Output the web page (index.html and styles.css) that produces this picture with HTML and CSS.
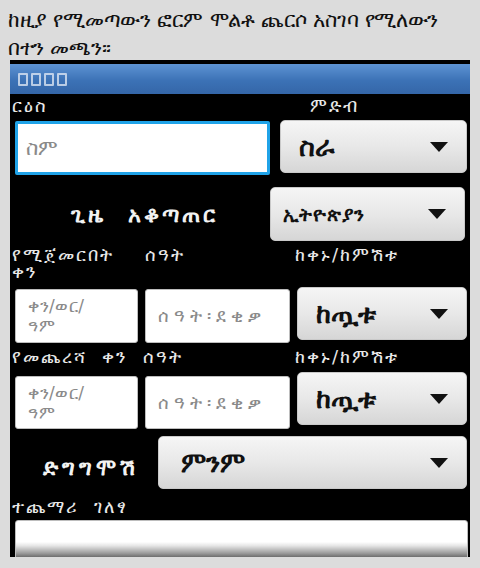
FILE: index.html
```html
<!DOCTYPE html>
<html lang="am">
<head>
<meta charset="utf-8">
<link rel="stylesheet" href="styles.css">
</head>
<body>
<p class="intro"><span class="line">ከዚያ የሚመጣውን ፎርም ሞልቶ ጨርሶ አስገባ የሚለውን</span><span class="line">በተን መጫን፡፡</span></p>
<div class="phone">
  <div class="titlebar"><span class="box"></span><span class="box"></span><span class="box"></span><span class="box"></span></div>
  <div class="form">
    <div class="labels row-a-labels">
      <span class="lbl lbl-title">ርዕስ</span>
      <span class="lbl lbl-cat">ምድብ</span>
    </div>
    <div class="row row-a">
      <div class="field field-focus w-name"><span class="ph ph-big">ስም</span></div>
      <div class="spinner w-cat"><span class="sp-text sp-big">ስራ</span><svg class="tri" viewBox="0 0 18 10"><polygon points="0,0 18,0 9,10"/></svg></div>
    </div>
    <div class="row row-b">
      <div class="caption w-cal">ጊዜ &nbsp;አቆጣጠር</div>
      <div class="spinner w-calsp"><span class="sp-text sp-small">ኢትዮጵያን</span><svg class="tri" viewBox="0 0 18 10"><polygon points="0,0 18,0 9,10"/></svg></div>
    </div>
    <div class="labels row-c-labels">
      <span class="lbl lbl-start">የሚጀመርበት ቀን</span>
      <span class="lbl lbl-time">ሰዓት</span>
      <span class="lbl">ከቀኑ/ከምሽቱ</span>
    </div>
    <div class="row row-c">
      <div class="field w-date"><span class="ph ph-small">ቀን/ወር/ ዓም</span></div>
      <div class="field w-time"><span class="ph ph-mid">ሰዓት፡ደቂቃ</span></div>
      <div class="spinner w-ampm"><span class="sp-text sp-big">ከጧቱ</span><svg class="tri" viewBox="0 0 18 10"><polygon points="0,0 18,0 9,10"/></svg></div>
    </div>
    <div class="labels row-d-labels">
      <span class="lbl lbl-end">የመጨረሻ &nbsp;ቀን &nbsp;ሰዓት</span>
      <span class="lbl">ከቀኑ/ከምሽቱ</span>
    </div>
    <div class="row row-d">
      <div class="field w-date"><span class="ph ph-small">ቀን/ወር/ ዓም</span></div>
      <div class="field w-time"><span class="ph ph-mid">ሰዓት፡ደቂቃ</span></div>
      <div class="spinner w-ampm"><span class="sp-text sp-big">ከጧቱ</span><svg class="tri" viewBox="0 0 18 10"><polygon points="0,0 18,0 9,10"/></svg></div>
    </div>
    <div class="row row-e">
      <div class="caption w-rep">ድግግሞሽ</div>
      <div class="spinner w-repsp"><span class="sp-text sp-big sp-indent">ምንም</span><svg class="tri" viewBox="0 0 18 10"><polygon points="0,0 18,0 9,10"/></svg></div>
    </div>
    <div class="labels row-f-labels">
      <span class="lbl">ተጨማሪ &nbsp;ገለፃ</span>
    </div>
    <div class="field field-desc"></div>
  </div>
</div>
</body>
</html>
```

FILE: styles.css
```css
* { box-sizing: border-box; }
html, body { margin: 0; padding: 0; }
body {
  background: #dcdcdc;
  width: 480px;
  height: 568px;
  overflow: hidden;
  font-family: "DejaVu Sans", "Noto Sans", sans-serif;
}
.intro {
  margin: 0;
  padding: 6px 8px 0 8px;
  font-family: "DejaVu Serif", "Liberation Serif", serif;
  font-size: 21px;
  letter-spacing: -0.3px;
  line-height: 28px;
  height: 60px;
  color: #111;
}
.line { display: block; white-space: nowrap; }
.phone {
  margin-left: 10px;
  width: 460px;
  height: 497px;
  background: #000;
  padding-top: 4px;
  overflow: hidden;
}
.titlebar {
  height: 30px;
  background: linear-gradient(#5d93d3, #3c72b6 55%, #3466a8);
  display: flex;
  align-items: center;
  gap: 3px;
  padding-left: 8px;
  padding-top: 1px;
}
.box {
  width: 10px;
  height: 13px;
  border: 2px solid rgba(230, 236, 245, 0.75);
  border-radius: 1px;
}
.form {
  padding: 0 3px 0 5px;
}
.labels {
  display: flex;
  color: #e8e8e8;
  font-size: 18px;
  letter-spacing: 2px;
  line-height: 17px;
  margin-left: -3px;
}
.lbl { display: block; white-space: nowrap; }
.row-a-labels { height: 27px; padding-top: 3px; }
.lbl-title { width: 298px; }
.row { display: flex; align-items: stretch; }
.row-a { height: 54px; gap: 10px; }
.w-name { width: 255px; }
.w-cat { width: 187px; height: 53px; margin-top: -1px; }
.row-b { height: 54px; margin-top: 12px; }
.w-cal { width: 255px; }
.w-calsp { width: 195px; }
.row-c-labels { height: 48px; padding-top: 5px; }
.lbl-start { width: 133px; white-space: normal; padding-right: 28px; }
.lbl-time { width: 150px; }
.row-c { height: 54px; gap: 7px; }
.w-date { width: 123px; }
.w-time { width: 145px; }
.w-ampm { width: 170px; height: 53px; margin-top: -2px; }
.row-d-labels { height: 33px; padding-top: 5px; }
.lbl-end { width: 283px; }
.row-d { height: 53px; gap: 7px; }
.row-d .w-ampm { margin-top: -4px; }
.row-e { height: 53px; margin-top: 7px; }
.w-rep { width: 143px; }
.w-repsp { width: 309px; }
.row-f-labels { height: 31px; padding-top: 9px; }

.field {
  background: #fff;
  border: 1px solid #bdbdbd;
  border-radius: 3px;
  display: flex;
  align-items: center;
  padding-left: 10px;
}
.field-focus {
  border: 3px solid #20a3e8;
  border-radius: 2px;
  padding-left: 8px;
}
.field-desc {
  width: 453px;
  height: 40px;
  border-radius: 3px 3px 0 0;
  background: linear-gradient(#fff, #fff 55%, #e6e6e6 65%, #9a9a9a 85%, #555 100%);
}
.ph { color: #8a8a8a; }
.ph-big { font-size: 21px; }
.ph-mid { font-size: 18px; letter-spacing: 5px; padding-left: 2px; white-space: nowrap; }
.ph-small { font-size: 17px; line-height: 20px; width: 84px; padding-left: 2px; letter-spacing: 0.5px; }

.caption {
  color: #f2f2f2;
  font-size: 22px;
  font-weight: bold;
  letter-spacing: 3px;
  display: flex;
  align-items: center;
  justify-content: center;
}
.row-b .caption { padding-left: 4px; }
.row-e .caption { padding-left: 8px; padding-top: 10px; font-size: 22px; letter-spacing: 4px; }

.spinner {
  background: linear-gradient(#f5f5f5, #e8e8e8 50%, #d6d6d6);
  border: 1px solid #c9c9c9;
  border-radius: 5px;
  display: flex;
  align-items: center;
  justify-content: space-between;
  padding: 0 18px 0 18px;
}
.sp-text { color: #111; font-weight: bold; }
.sp-big { font-size: 27px; }
.sp-small { font-size: 19px; margin-left: -6px; letter-spacing: 1px; }
.sp-indent { margin-left: 4px; }
.tri { width: 18px; height: 10px; fill: #111; }
```
